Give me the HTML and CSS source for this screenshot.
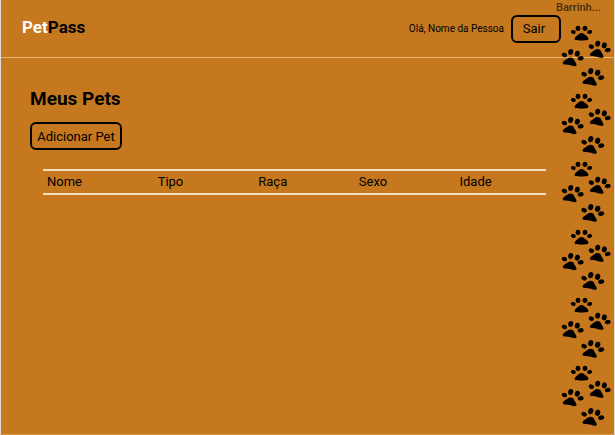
FILE: index.html
```html
<!DOCTYPE html>
<html lang="pt-BR">
<head>
<meta charset="utf-8">
<meta name="viewport" content="width=device-width, initial-scale=1">
<title>PetPass</title>
<link rel="stylesheet" href="styles.css">
</head>
<body>
<svg class="defs" aria-hidden="true">
  <symbol id="tilted" viewBox="0 0 72 52" overflow="visible">
    <ellipse cx="9" cy="14" rx="8" ry="6.5" transform="rotate(25 9 14)"/>
    <ellipse cx="28" cy="5" rx="7.5" ry="9" transform="rotate(12 28 5)"/>
    <ellipse cx="48" cy="10" rx="7.5" ry="9" transform="rotate(15 48 10)"/>
    <ellipse cx="58" cy="24" rx="9" ry="6.5" transform="rotate(-12 58 24)"/>
    <path d="M5 40C2 36 10 30 15 27C21 23 25 20 31 22C38 23 38 30 42 35C45 40 48 46 43 47C37 49 31 45 25 44C17 42 9 44 5 40Z"/>
  </symbol>
  <symbol id="paws" viewBox="0 0 156 186" overflow="visible">
    <ellipse cx="40" cy="21" rx="7.5" ry="6" transform="rotate(15 40 21)"/>
    <ellipse cx="54" cy="10" rx="7" ry="8"/>
    <ellipse cx="75" cy="10" rx="7" ry="8"/>
    <ellipse cx="89" cy="21" rx="7.5" ry="6" transform="rotate(-15 89 21)"/>
    <path d="M46 45C41 42 46 36 52 31C57 27 59 24 64 24C70 24 72 27 77 31C84 36 88 42 83 45C77 47 52 47 46 45Z"/>
    <use href="#tilted" x="85" y="51" width="72" height="52"/>
    <use href="#tilted" x="4" y="76" width="72" height="52"/>
    <use href="#tilted" x="63" y="133" width="75" height="54"/>
  </symbol>
</svg>
<header class="topbar">
  <div class="brand"><span class="brand-light">Pet</span>Pass</div>
  <div class="account">
    <span class="greeting">Olá, Nome da Pessoa</span>
    <button class="btn btn-exit" type="button">Sair</button>
  </div>
</header>
<main class="content">
  <h1>Meus Pets</h1>
  <button class="btn btn-add" type="button">Adicionar Pet</button>
  <table class="pets">
    <thead>
      <tr><th class="name" scope="col">Nome</th><th class="kind" scope="col">Tipo</th><th class="breed" scope="col">Raça</th><th class="sex" scope="col">Sexo</th><th scope="col">Idade</th></tr>
    </thead>
  </table>
</main>
<aside class="strip">
  <span class="strip-label">Barrinh...</span>
  <svg><use href="#paws"/></svg>
  <svg><use href="#paws"/></svg>
  <svg><use href="#paws"/></svg>
  <svg><use href="#paws"/></svg>
  <svg><use href="#paws"/></svg>
  <svg><use href="#paws"/></svg>
</aside>
</body>
</html>
```
FILE: styles.css
```css
* {
  box-sizing: border-box;
}

body {
  position: relative;
  min-height: 100vh;
  margin: 0;
  border: 1px solid #e0dcd8;
  border-width: 0 1px 0 1px;
  border-bottom: 1px solid #dc9440;
  background: #c5781d;
  color: #000;
  font-family: Roboto, sans-serif;
}

.defs {
  position: absolute;
  width: 0;
  height: 0;
}

.topbar {
  display: flex;
  align-items: center;
  justify-content: space-between;
  height: 58px;
  padding: 0 53px 0 21px;
  border-bottom: 1px solid #e5b578;
}

.brand {
  padding-bottom: 4px;
  font-size: 17px;
  font-weight: 700;
  line-height: 20px;
}

.brand-light {
  color: #fff;
}

.account {
  display: flex;
  align-items: center;
  gap: 7px;
}

.greeting {
  font-size: 10px;
}

.btn {
  height: 28px;
  padding: 0;
  border: 2px solid #000;
  border-radius: 6px;
  background: transparent;
  color: #000;
  font-family: inherit;
  font-size: 13px;
}

.btn-exit {
  width: 50px;
  padding-right: 4px;
}

.btn-add {
  display: block;
  width: 92px;
}

.content {
  padding: 29px 68px 0 29px;
}

h1 {
  margin: 0 0 11px;
  font-size: 19px;
  font-weight: 700;
  line-height: 24px;
}

.pets {
  width: calc(100% - 13px);
  margin: 19px 0 0 13px;
  border-collapse: separate;
  border-spacing: 0;
  table-layout: fixed;
}

.pets th {
  height: 26px;
  padding: 0 0 0 4px;
  border: solid #f3dfc3;
  border-width: 2px 0;
  font-size: 13px;
  font-weight: 400;
  line-height: 20px;
  text-align: left;
}

.pets .name {
  width: 22%;
}

.pets .kind {
  width: 20%;
}

.pets .breed {
  width: 20%;
}

.pets .sex {
  width: 20%;
}

.strip {
  position: absolute;
  top: 0;
  right: 2px;
  display: flex;
  flex-direction: column;
  align-items: flex-end;
  gap: 6px;
  width: 56px;
}

.strip-label {
  align-self: flex-start;
  height: 19px;
  color: #4a2c0a;
  font-size: 11px;
  font-weight: 500;
  line-height: 15px;
}

.strip svg {
  flex: none;
  width: 52px;
  height: 62px;
}
```
